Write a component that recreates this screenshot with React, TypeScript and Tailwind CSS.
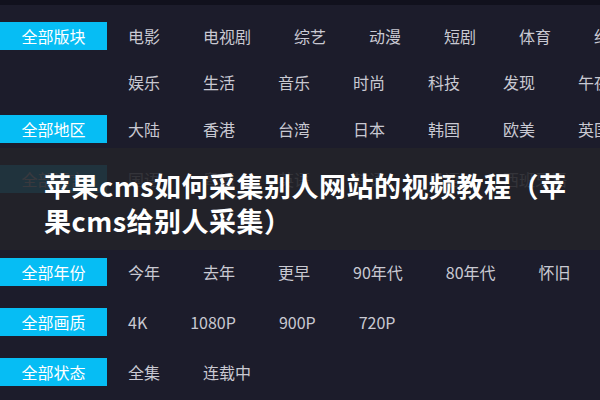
const rows: { label?: string; items: string[]; top: string }[] = [
  { label: "全部版块", items: ["电影", "电视剧", "综艺", "动漫", "短剧", "体育", "纪录片"], top: "mt-[17px]" },
  { items: ["娱乐", "生活", "音乐", "时尚", "科技", "发现", "午夜"], top: "mt-[18px]" },
  { label: "全部地区", items: ["大陆", "香港", "台湾", "日本", "韩国", "欧美", "英国"], top: "mt-[19px]" },
  { label: "全部语言", items: ["国语", "粤语", "英语", "韩语", "日语", "西班牙语"], top: "mt-[22px]" },
  { label: "全部年份", items: ["今年", "去年", "更早", "90年代", "80年代", "怀旧"], top: "mt-[65px]" },
  { label: "全部画质", items: ["4K", "1080P", "900P", "720P"], top: "mt-[22px]" },
  { label: "全部状态", items: ["全集", "连载中"], top: "mt-[22px]" },
];

export default function App() {
  return (
    <div
      className="relative h-[400px] w-[600px] overflow-hidden bg-[#1c1c2b]"
      style={{ fontFamily: '"Noto Sans CJK SC", "Noto Sans", sans-serif' }}
    >
      <div className="h-[5px] bg-[#11111d]" />
      <div className="flex flex-col">
        {rows.map((row, i) => (
          <div key={i} className={`flex h-[28px] items-center whitespace-nowrap ${row.top}`}>
            <div
              className={`flex h-[28px] w-[107px] shrink-0 items-center justify-center text-[16px] text-white ${
                row.label ? "bg-[#06bdf4]" : ""
              }`}
            >
              {row.label}
            </div>
            <div className="ml-[21px] flex gap-x-[43px] text-[16px] text-[#c9c9d2]">
              {row.items.map((item) => (
                <span key={item}>{item}</span>
              ))}
            </div>
          </div>
        ))}
      </div>

      <div className="absolute left-0 top-[148px] h-[102px] w-full bg-[#242429]/90 pl-[44px] pt-[20px]">
        <p className="whitespace-nowrap text-[27px] font-bold leading-[35px] tracking-[0.5px] text-white">
          苹果cms如何采集别人网站的视频教程（苹
          <br />
          果cms给别人采集）
        </p>
      </div>
    </div>
  );
}
